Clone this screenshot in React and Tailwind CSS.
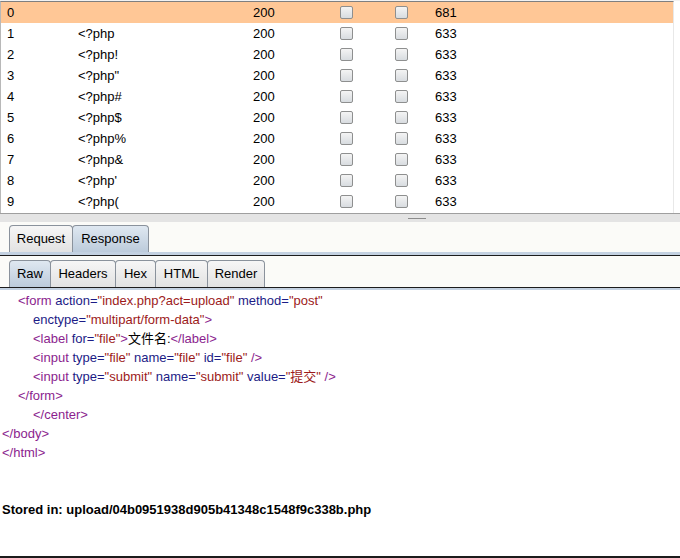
import React from 'react';

const rows = [
    { id: 0, payload: '', status: 200, length: 681 },
    { id: 1, payload: '<?php', status: 200, length: 633 },
    { id: 2, payload: '<?php!', status: 200, length: 633 },
    { id: 3, payload: '<?php"', status: 200, length: 633 },
    { id: 4, payload: '<?php#', status: 200, length: 633 },
    { id: 5, payload: '<?php$', status: 200, length: 633 },
    { id: 6, payload: '<?php%', status: 200, length: 633 },
    { id: 7, payload: '<?php&', status: 200, length: 633 },
    { id: 8, payload: "<?php'", status: 200, length: 633 },
    { id: 9, payload: '<?php(', status: 200, length: 633 },
];

const Box = () => (
    <span className="block w-[13px] h-[13px] rounded-[2px] border border-[#8e8f8f] bg-gradient-to-b from-[#f4f4f4] to-[#d8dce0]" />
);

// tag / attribute / value colours as in the raw response view
const T = ({ children }) => <span className="text-[#8b1e8e]">{children}</span>;
const A = ({ children }) => <span className="text-[#1c1c86]">{children}</span>;
const V = ({ children }) => <span className="text-[#9c1a1a]">{children}</span>;

const Tab = ({ label, active, w }) => (
    <div
        className={`h-[27px] ${w} flex items-center justify-center border border-b-0 border-[#8a929c] rounded-t-[4px] -ml-px first:ml-0 ${
            active ? 'bg-gradient-to-b from-[#dfe8f1] to-[#bccbdb]' : 'bg-gradient-to-b from-[#f6f6f6] to-[#e2e2e2]'
        }`}
    >
        {label}
    </div>
);

const App = () => {
    return (
        <div className="w-[680px] h-[558px] bg-white overflow-hidden text-[13px] text-black font-['Liberation_Sans','Noto_Sans_CJK_SC',sans-serif]">
            {/* results table */}
            <div className="h-px bg-[#f2f2f2]" />
            <div className="w-[674px] border-t border-[#7f7f7f] border-l border-l-[#b8b8b8] border-r border-r-[#e8e8e8]">
                {rows.map((r) => (
                    <div key={r.id} className={`h-[21px] flex items-center ${r.id === 0 ? 'bg-[#ffc796]' : 'bg-white'}`}>
                        <div className="w-[70px] pl-[6px]">{r.id}</div>
                        <div className="w-[175px] pl-[7px]">{r.payload}</div>
                        <div className="w-[85px] pl-[7px]">{r.status}</div>
                        <div className="w-[56px] pl-[9px]"><Box /></div>
                        <div className="w-[41px] pl-[8px]"><Box /></div>
                        <div className="pl-[7px]">{r.length}</div>
                    </div>
                ))}
                <div className="h-px bg-white" />
            </div>

            {/* splitter */}
            <div className="h-px bg-[#9f9f9f]" />
            <div className="h-[8px] bg-[#e4e4e4] flex items-center justify-center pl-[153px]">
                <div className="w-[18px] h-px bg-[#8c8c8c]" />
            </div>

            {/* request / response tabs */}
            <div className="bg-[#fbfbf8] pt-[3px] pl-[9px] flex">
                <Tab label="Request" w="w-[64px]" />
                <Tab label="Response" w="w-[77px]" active />
            </div>
            <div className="h-[3px] bg-[#c3d1e1]" />
            <div className="h-px bg-[#1c1c1c]" />

            {/* raw / headers / hex ... */}
            <div className="bg-[#fbfbf8] pt-[4px] pl-[9px] flex">
                <Tab label="Raw" w="w-[42px]" active />
                <Tab label="Headers" w="w-[66px]" />
                <Tab label="Hex" w="w-[41px]" />
                <Tab label="HTML" w="w-[53px]" />
                <Tab label="Render" w="w-[58px]" />
            </div>
            <div className="h-px bg-[#1c1c1c]" />
            <div className="h-[2px] bg-[#c3d1e1]" />

            {/* response body */}
            <div className="pt-[1px] leading-[19px]">
                <div className="pl-[18px]">
                    <T>&lt;form</T> <A>action=</A><V>"index.php?act=upload"</V> <A>method=</A><V>"post"</V>
                </div>
                <div className="pl-[33px]">
                    <A>enctype=</A><V>"multipart/form-data"</V><T>&gt;</T>
                </div>
                <div className="pl-[33px]">
                    <T>&lt;label</T> <A>for=</A><V>"file"</V><T>&gt;</T>文件名:<T>&lt;/label&gt;</T>
                </div>
                <div className="pl-[33px]">
                    <T>&lt;input</T> <A>type=</A><V>"file"</V> <A>name=</A><V>"file"</V> <A>id=</A><V>"file"</V> <T>/&gt;</T>
                </div>
                <div className="pl-[33px]">
                    <T>&lt;input</T> <A>type=</A><V>"submit"</V> <A>name=</A><V>"submit"</V> <A>value=</A><V>"提交"</V> <T>/&gt;</T>
                </div>
                <div className="pl-[18px]"><T>&lt;/form&gt;</T></div>
                <div className="pl-[33px]"><T>&lt;/center&gt;</T></div>
                <div className="pl-[2px]"><T>&lt;/body&gt;</T></div>
                <div className="pl-[2px]"><T>&lt;/html&gt;</T></div>
                <div className="h-[38px]" />
                <div className="pl-[2px] font-bold">Stored in: upload/04b0951938d905b41348c1548f9c338b.php</div>
            </div>
            <div className="mt-[37px] h-[2px] bg-[#1c1c1c]" />
        </div>
    );
};

export default App;
